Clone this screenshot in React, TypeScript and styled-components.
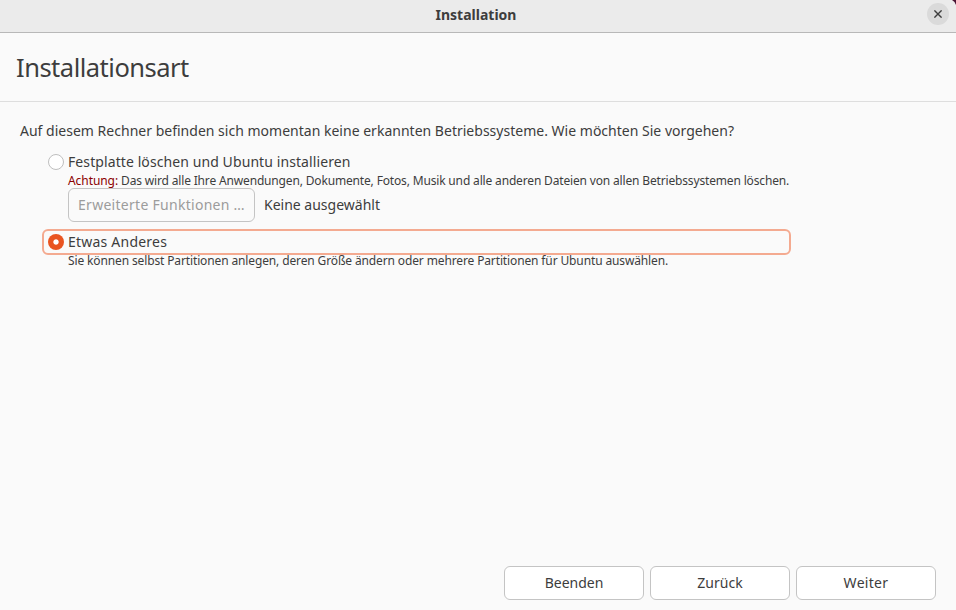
import React, { useState } from "react";
import styled, { createGlobalStyle } from "styled-components";

const GlobalStyle = createGlobalStyle`
  * { box-sizing: border-box; }
  html, body { margin: 0; background: #fafafa; }
`;

const Window = styled.main`
  display: flex;
  flex-direction: column;
  width: 956px;
  height: 610px;
  overflow: hidden;
  background: #fafafa;
  color: #3d3d3d;
  font: 14px/20px "Noto Sans", "Open Sans", sans-serif;
`;

const TitleBar = styled.header`
  display: grid;
  grid-template-columns: 1fr auto 1fr;
  align-items: center;
  flex: none;
  height: 33px;
  padding: 0 7px 4px 3px;
  position: relative;
  background: #ebebeb;
  border-bottom: 1px solid #b8b8b8;
`;

const WindowTitle = styled.span`
  grid-column: 2;
  padding-top: 2px;
  font-weight: 700;
`;

const CloseButton = styled.button`
  display: grid;
  place-items: center;
  justify-self: end;
  width: 22px;
  height: 22px;
  padding: 0;
  border: 0;
  border-radius: 50%;
  background: #dadada;
  color: #3d3d3d;
`;

const Corner = styled.svg`
  position: absolute;
  top: 0;
  right: 0;
`;

const PageHeader = styled.div`
  display: flex;
  align-items: center;
  flex: none;
  height: 69px;
  padding: 0 16px;
  border-bottom: 1px solid #dedede;
`;

const Heading = styled.h1`
  margin: 0;
  font-size: 25.5px;
  line-height: 34px;
  font-weight: 400;
  letter-spacing: -0.5px;
`;

const Content = styled.section`
  flex: 1;
  padding: 19px 20px 0;
`;

const Text = styled.span<{ $spacing?: number }>`
  white-space: nowrap;
  letter-spacing: ${(p) => p.$spacing ?? 0}px;
`;

const Options = styled.div`
  display: flex;
  flex-direction: column;
  width: 749px;
  margin: 8px 0 0 22px;
`;

const OptionRow = styled.label<{ $focused: boolean }>`
  display: flex;
  align-items: center;
  gap: 4px;
  height: 26px;
  padding: 0 4px;
  border: 2px solid ${(p) => (p.$focused ? "#f4aa90" : "transparent")};
  border-radius: 6px;
`;

const Radio = styled.input`
  appearance: none;
  flex: none;
  width: 16px;
  height: 16px;
  margin: 0;
  border: 1px solid #bfbfbf;
  border-radius: 50%;
  background: #fff;
  outline: none;

  &:checked {
    border: 0;
    background: radial-gradient(circle, #fff 2.2px, #e95420 3.1px);
  }
`;

const Hint = styled.p`
  display: flex;
  gap: 3px;
  margin: 0 0 0 26px;
  height: 13px;
  font-size: 12px;
  line-height: 11px;
`;

const Warning = styled.span`
  color: #8b0000;
  letter-spacing: -0.07px;
`;

const AdvancedRow = styled.div`
  display: flex;
  align-items: center;
  gap: 9px;
  margin: 0 0 7px 26px;
`;

const Button = styled.button<{ $width: number; $spacing?: number }>`
  width: ${(p) => p.$width}px;
  height: 34px;
  padding: 0;
  border: 1px solid #c4c4c4;
  border-radius: 6px;
  background: #fff;
  color: inherit;
  font: inherit;
  letter-spacing: ${(p) => p.$spacing ?? 0}px;
  white-space: nowrap;

  &:disabled {
    background: #fafafa;
    color: #9c9c9c;
  }
`;

const Footer = styled.footer`
  display: flex;
  justify-content: flex-end;
  gap: 6px;
  flex: none;
  padding: 0 20px 10px;
`;

type Choice = "erase" | "other";

export default function App() {
  const [choice, setChoice] = useState<Choice>("other");

  return (
    <Window>
      <GlobalStyle />
      <TitleBar>
        <WindowTitle>Installation</WindowTitle>
        <CloseButton aria-label="Schließen">
          <svg width="8" height="8" viewBox="0 0 8 8" fill="none" stroke="currentColor" strokeWidth="1.4">
            <path d="M.4.4l7.2 7.2M7.6.4L.4 7.6" />
          </svg>
        </CloseButton>
        <Corner width="4" height="5" viewBox="0 0 4 5" aria-hidden="true">
          <path d="M0 0H4V5Q3 1.5 0 0Z" fill="#4a1233" />
        </Corner>
      </TitleBar>
      <PageHeader>
        <Heading>Installationsart</Heading>
      </PageHeader>
      <Content>
        <Text $spacing={0.01}>
          Auf diesem Rechner befinden sich momentan keine erkannten Betriebssysteme. Wie möchten Sie vorgehen?
        </Text>
        <Options>
          <OptionRow $focused={choice === "erase"}>
            <Radio type="radio" name="type" checked={choice === "erase"} onChange={() => setChoice("erase")} />
            <Text $spacing={0.09}>Festplatte löschen und Ubuntu installieren</Text>
          </OptionRow>
          <Hint>
            <Warning>Achtung:</Warning>
            <Text $spacing={-0.161}>
              Das wird alle Ihre Anwendungen, Dokumente, Fotos, Musik und alle anderen Dateien von allen
              Betriebssystemen löschen.
            </Text>
          </Hint>
          <AdvancedRow>
            <Button $width={187} $spacing={0.28} disabled>
              Erweiterte Funktionen …
            </Button>
            <Text>Keine ausgewählt</Text>
          </AdvancedRow>
          <OptionRow $focused={choice === "other"}>
            <Radio type="radio" name="type" checked={choice === "other"} onChange={() => setChoice("other")} />
            <Text $spacing={0.22}>Etwas Anderes</Text>
          </OptionRow>
          <Hint>
            <Text $spacing={-0.13}>
              Sie können selbst Partitionen anlegen, deren Größe ändern oder mehrere Partitionen für Ubuntu auswählen.
            </Text>
          </Hint>
        </Options>
      </Content>
      <Footer>
        <Button $width={140}>Beenden</Button>
        <Button $width={140}>Zurück</Button>
        <Button $width={140} $spacing={0.3}>Weiter</Button>
      </Footer>
    </Window>
  );
}
